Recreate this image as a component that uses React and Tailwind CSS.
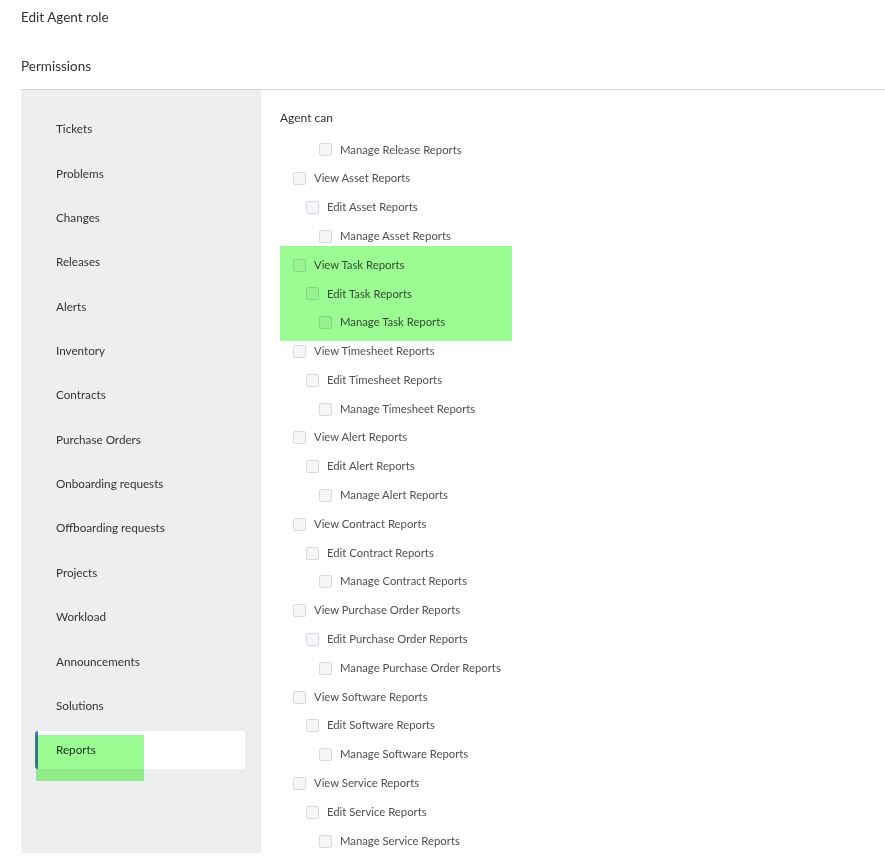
import React from 'react';

const modules = [
    'Tickets', 'Problems', 'Changes', 'Releases', 'Alerts', 'Inventory', 'Contracts',
    'Purchase Orders', 'Onboarding requests', 'Offboarding requests', 'Projects',
    'Workload', 'Announcements', 'Solutions', 'Reports',
];

const reportGroups = ['Asset', 'Task', 'Timesheet', 'Alert', 'Contract', 'Purchase Order', 'Software', 'Service'];

// first row is the tail of the Release group, the rest come in view / edit / manage triplets
const rows = [
    { level: 2, label: 'Manage Release Reports' },
    ...reportGroups.flatMap((g) => [
        { level: 0, label: `View ${g} Reports` },
        { level: 1, label: `Edit ${g} Reports` },
        { level: 2, label: `Manage ${g} Reports` },
    ]),
];

const indent = ['pl-[13px]', 'pl-[26px]', 'pl-[39px]'];

const PermissionRow = ({ level, label }) => (
    <label className={`flex h-[28.8px] items-center gap-[8px] ${indent[level]}`}>
        <span className="h-[13px] w-[13px] shrink-0 rounded-[2px] border border-[#d7dbe0] bg-[#f5f6f8]" />
        <span className="text-[11.3px] text-[#505050]">{label}</span>
    </label>
);

const App = () => {
    return (
        <div className="relative h-[864px] overflow-hidden bg-white pl-[21px] font-['Lato',sans-serif] text-[#333]">
            <h1 className="pt-[7px] text-[13.5px] leading-[20px]">Edit Agent role</h1>
            <h2 className="mt-[29px] text-[13.5px] leading-[20px]">Permissions</h2>

            <div className="mt-[13px] flex border-t border-[#d6d6d6]">
                {/* Module list */}
                <div className="flex h-[763px] w-[240px] shrink-0 flex-col gap-[6.36px] bg-[#edeef0] pt-[20px]">
                    {modules.map((m) => {
                        const active = m === 'Reports';
                        return (
                            <div
                                key={m}
                                className={`ml-[14px] flex h-[38px] w-[210px] items-center rounded-[3px] text-[11.7px] ${
                                    active ? 'border-l-[3px] border-[#4a78c8] bg-white pl-[18px]' : 'pl-[21px]'
                                }`}
                            >
                                {m}
                            </div>
                        );
                    })}
                </div>

                {/* Permission tree */}
                <div className="flex-1 pl-[19px] pt-[20px]">
                    <p className="text-[12px] leading-[16px] text-[#333]">Agent can</p>
                    <div className="mt-[9.6px]">
                        {rows.map((r) => (
                            <PermissionRow key={r.label} {...r} />
                        ))}
                    </div>
                </div>
            </div>

            {/* highlight marks */}
            <div className="absolute left-[280px] top-[246px] h-[95px] w-[232px] bg-[#9cfc94] mix-blend-multiply" />
            <div className="absolute left-[36px] top-[735px] h-[46px] w-[108px] bg-[#9cfc94] mix-blend-multiply" />
        </div>
    );
};

export default App;
